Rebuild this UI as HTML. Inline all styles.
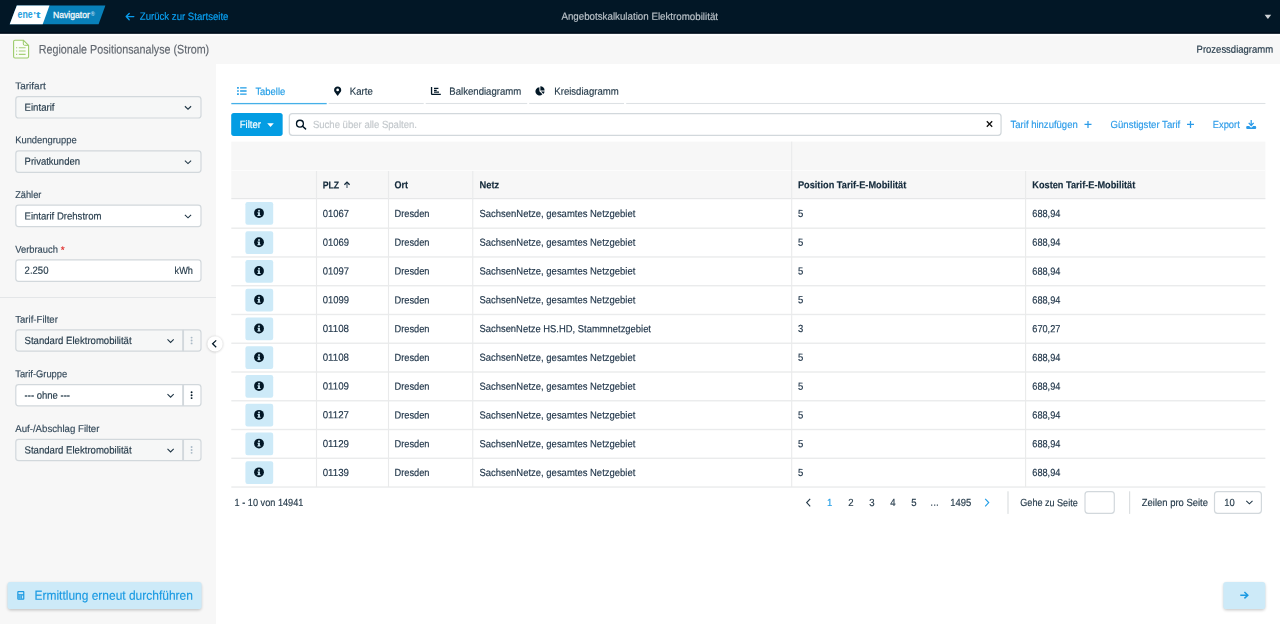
<!DOCTYPE html>
<html lang="de"><head><meta charset="utf-8"><title>Regionale Positionsanalyse (Strom)</title>
<style>
*{box-sizing:border-box;margin:0;padding:0}
html,body{width:1280px;height:624px;overflow:hidden;background:#fff}
body{position:relative;font-family:"Liberation Sans",sans-serif;font-size:9.6px;color:#1f3545}
#bg{position:absolute;left:0;top:0;display:block}
#txt{position:absolute;left:0;top:0;width:1280px;height:624px;will-change:transform}
.t{position:absolute;white-space:nowrap;line-height:14px;height:14px;-webkit-text-stroke:0.15px currentColor}

</style></head><body>
<svg id="bg" width="1280" height="624" viewBox="0 0 1280 624">
<defs><filter id="b1" x="-50%" y="-50%" width="200%" height="200%"><feGaussianBlur stdDeviation="1.2"/></filter><filter id="b2" x="-20%" y="-50%" width="140%" height="200%"><feGaussianBlur stdDeviation="1.4"/></filter></defs>
<rect x="0.00" y="30.00" width="1280.00" height="34.00" fill="#f7f7f7"/>
<rect x="0.00" y="64.00" width="216.00" height="560.00" fill="#f7f7f7"/>
<rect x="0.00" y="34.00" width="1280.00" height="1.80" fill="#ffffff" opacity="0.85"/>
<rect x="0.00" y="0.00" width="1280.00" height="33.70" fill="#021726"/>
<rect x="0.00" y="32.00" width="1280.00" height="1.70" fill="#000c19" opacity="0.7"/>
<g transform="translate(0.00,0.00)"><polygon points="16.8,5.6 105.4,5.6 98.6,24.2 9.7,24.2" fill="#0880b9"/><polygon points="16.8,5.6 49.5,5.6 42.7,24.2 9.7,24.2" fill="#ffffff"/>
<text transform="translate(17.6,18.0) scale(0.79,1)" font-family="Liberation Sans, sans-serif" font-weight="bold" font-size="11.1" fill="#27a0de">ene</text>
<text transform="translate(33.4,18.0) scale(1.1,1)" font-family="Liberation Sans, sans-serif" font-weight="bold" font-size="8.6" fill="#27a0de">'</text>
<text transform="translate(36.0,18.0) scale(1.55,1)" font-family="Liberation Sans, sans-serif" font-weight="bold" font-size="8.8" fill="#27a0de">t</text>
<text x="52.9" y="18.05" font-family="Liberation Sans, sans-serif" font-size="8.5" fill="#f2f7fa" stroke="#f2f7fa" stroke-width="0.3" textLength="37" lengthAdjust="spacingAndGlyphs">Navigator</text>
<text x="90.4" y="15.6" font-family="Liberation Sans, sans-serif" font-weight="bold" font-size="6" fill="#aed8ee">®</text></g>
<g transform="translate(125.60,16.60)"><path d="M3.6 -3.1 L0.6 0 L3.6 3.1 M0.8 0 H8.2" fill="none" stroke="#0a9bea" stroke-width="1.4" stroke-linecap="round" stroke-linejoin="round"/></g>
<g transform="translate(1264.60,14.80)"><path d="M0 0 H6.6 L3.3 4.2 Z" fill="#cfd3d6"/></g>
<g transform="translate(12.00,39.00)"><path d="M3 1.2 H11.3 L16.6 6.3 V17.6 Q16.6 19 15.2 19 H3 Q1.6 19 1.6 17.6 V2.6 Q1.6 1.2 3 1.2 Z" fill="#fbfdf8" stroke="#9ccb6a" stroke-width="1.1" stroke-linejoin="round"/>
<path d="M11.3 1.4 V5 Q11.3 6.3 12.6 6.3 H16.4" fill="none" stroke="#9ccb6a" stroke-width="1"/>
<path d="M4 8.7 H5.2 M6.8 8.7 H13.6 M4 12 H5.2 M6.8 12 H13.6 M4 15.4 H5.2 M6.8 15.4 H13.6" stroke="#a5d078" stroke-width="1.1" fill="none"/></g>
<rect x="15.80" y="96.60" width="185.20" height="21.40" fill="#f6f7f7" rx="2.8" stroke="#d2d8dc" stroke-width="1.2"/>
<g transform="translate(188.00,107.70)"><path d="M-3.1 -1.45 L0 1.55 L3.1 -1.45" fill="none" stroke="#1f3545" stroke-width="1.05"/></g>
<rect x="15.80" y="150.90" width="185.20" height="21.40" fill="#f6f7f7" rx="2.8" stroke="#d2d8dc" stroke-width="1.2"/>
<g transform="translate(188.00,162.00)"><path d="M-3.1 -1.45 L0 1.55 L3.1 -1.45" fill="none" stroke="#1f3545" stroke-width="1.05"/></g>
<rect x="15.80" y="205.10" width="185.20" height="21.50" fill="#ffffff" rx="2.8" stroke="#d2d8dc" stroke-width="1.2"/>
<g transform="translate(188.00,216.25)"><path d="M-3.1 -1.45 L0 1.55 L3.1 -1.45" fill="none" stroke="#1f3545" stroke-width="1.05"/></g>
<rect x="15.80" y="259.90" width="185.20" height="21.40" fill="#ffffff" rx="2.8" stroke="#d2d8dc" stroke-width="1.2"/>
<rect x="0.00" y="297.00" width="216.00" height="1.00" fill="#e4e6e8"/>
<rect x="15.80" y="329.90" width="185.20" height="21.20" fill="#f6f7f7" rx="2.8" stroke="#d2d8dc" stroke-width="1.2"/>
<rect x="182.15" y="329.80" width="1.90" height="21.40" fill="#d2d8dc"/>
<g transform="translate(170.60,340.90)"><path d="M-3.1 -1.45 L0 1.55 L3.1 -1.45" fill="none" stroke="#1f3545" stroke-width="1.05"/></g>
<circle cx="191.6" cy="337.60" r="0.95" fill="#a9b9c6"/>
<circle cx="191.6" cy="340.50" r="0.95" fill="#a9b9c6"/>
<circle cx="191.6" cy="343.40" r="0.95" fill="#a9b9c6"/>
<rect x="15.80" y="384.60" width="185.20" height="21.20" fill="#ffffff" rx="2.8" stroke="#d2d8dc" stroke-width="1.2"/>
<rect x="182.15" y="384.50" width="1.90" height="21.40" fill="#d2d8dc"/>
<g transform="translate(170.60,395.60)"><path d="M-3.1 -1.45 L0 1.55 L3.1 -1.45" fill="none" stroke="#1f3545" stroke-width="1.05"/></g>
<circle cx="191.6" cy="392.30" r="0.95" fill="#021726"/>
<circle cx="191.6" cy="395.20" r="0.95" fill="#021726"/>
<circle cx="191.6" cy="398.10" r="0.95" fill="#021726"/>
<rect x="15.80" y="439.30" width="185.20" height="21.30" fill="#f6f7f7" rx="2.8" stroke="#d2d8dc" stroke-width="1.2"/>
<rect x="182.15" y="439.20" width="1.90" height="21.50" fill="#d2d8dc"/>
<g transform="translate(170.60,450.35)"><path d="M-3.1 -1.45 L0 1.55 L3.1 -1.45" fill="none" stroke="#1f3545" stroke-width="1.05"/></g>
<circle cx="191.6" cy="447.05" r="0.95" fill="#a9b9c6"/>
<circle cx="191.6" cy="449.95" r="0.95" fill="#a9b9c6"/>
<circle cx="191.6" cy="452.85" r="0.95" fill="#a9b9c6"/>
<circle cx="215" cy="344.3" r="8.1" fill="#000" opacity="0.16" filter="url(#b1)"/>
<circle cx="215" cy="343.9" r="7.7" fill="#ffffff"/>
<g transform="translate(214.10,343.80)"><path d="M2.1 -3.4 L-1.5 0 L2.1 3.4" fill="none" stroke="#021726" stroke-width="1.25"/></g>
<rect x="7.80" y="583.30" width="193.50" height="27.00" fill="#000" rx="3" opacity="0.22" filter="url(#b2)"/>
<rect x="7.50" y="582.00" width="194.10" height="27.10" fill="#cdeaf8" rx="2.8"/>
<g transform="translate(17.25,591.00)"><rect x="0" y="0" width="7.1" height="8.8" rx="1" fill="#1b9ae2"/><rect x="1.2" y="1.2" width="4.7" height="2" fill="#cdeaf8"/><path d="M1.2 4.5h1.1v1h-1.1zM3 4.5h1.1v1h-1.1zM4.8 4.5h1.1v3h-1.1zM1.2 6.5h1.1v1h-1.1zM3 6.5h1.1v1h-1.1z" fill="#cdeaf8"/></g>
<rect x="231.30" y="102.95" width="95.40" height="1.30" fill="#45b0e8"/>
<rect x="328.70" y="102.95" width="95.00" height="1.10" fill="#dde1e4"/>
<rect x="425.70" y="102.95" width="101.50" height="1.10" fill="#dde1e4"/>
<rect x="529.20" y="102.95" width="94.80" height="1.10" fill="#dde1e4"/>
<rect x="626.20" y="102.95" width="639.20" height="1.10" fill="#dde1e4"/>
<g transform="translate(237.10,87.10)"><path d="M0 0h1.7v1.6H0zM0 3.1h1.7v1.6H0zM0 6.2h1.7v1.6H0zM3 0.15h6.5v1.3H3zM3 3.25h6.5v1.3H3zM3 6.35h6.5v1.3H3z" fill="#219de6"/></g>
<g transform="translate(334.10,86.50)"><path transform="scale(0.96)" d="M3.7 0C1.6 0 0 1.6 0 3.6 0 5.1 0.5 5.6 3.3 9.4a.5.5 0 0 0 .8 0C6.9 5.6 7.4 5.1 7.4 3.6 7.4 1.6 5.8 0 3.7 0z" fill="#021726"/><circle cx="3.55" cy="3.45" r="1.35" fill="#fff"/></g>
<g transform="translate(430.90,86.90)"><path d="M0.65 0 V6.9 Q0.65 7.55 1.3 7.55 H9.9" fill="none" stroke="#021726" stroke-width="1.3"/><path d="M3.1 0.95h4.4v1.25H3.1zM3.1 2.8h2.7v1.25H3.1zM3.1 4.65h5v1.25H3.1z" fill="#021726"/></g>
<g transform="translate(535.00,86.00)"><path d="M4.4 1.3 A4.1 4.1 0 1 0 7.4 8.3 L4.4 5.3 Z" fill="#021726"/><path d="M5.4 0.3 V4.5 H9.6 A4.2 4.2 0 0 0 5.4 0.3 Z" fill="#021726"/><path d="M6 5.5 H9.6 A4.2 4.2 0 0 1 8.4 7.9 Z" fill="#021726"/></g>
<rect x="231.20" y="113.00" width="51.45" height="22.90" fill="#039de3" rx="2.6"/>
<g transform="translate(267.20,123.30)"><path d="M0 0 H6.6 L3.3 3.8 Z" fill="#fff"/></g>
<rect x="289.32" y="113.62" width="711.75" height="21.65" fill="#ffffff" rx="3" stroke="#d2d8dc" stroke-width="1.25"/>
<g transform="translate(295.85,119.60)"><circle cx="4.1" cy="4.1" r="3.45" fill="none" stroke="#021726" stroke-width="1.3"/><path d="M6.7 6.7 L9.7 9.3" stroke="#021726" stroke-width="1.5" stroke-linecap="round"/></g>
<g transform="translate(989.50,124.00)"><path d="M-2.7 -2.7 L2.7 2.7 M2.7 -2.7 L-2.7 2.7" stroke="#111" stroke-width="1.3"/></g>
<g transform="translate(1088.00,124.40)"><path d="M0 -3.5 V3.5 M-3.5 0 H3.5" stroke="#2b9be8" stroke-width="1.25"/></g>
<g transform="translate(1190.50,124.40)"><path d="M0 -3.5 V3.5 M-3.5 0 H3.5" stroke="#2b9be8" stroke-width="1.25"/></g>
<g transform="translate(1246.20,119.80)"><path d="M5 0.2 V5.4 M2.5 3.1 L5 5.7 L7.5 3.1" fill="none" stroke="#2b9be8" stroke-width="1.25"/><path d="M1.1 6.3 H3 L4.3 7.5 Q5 8 5.7 7.5 L7 6.3 H8.9 Q10 6.3 10 7.4 V8.2 Q10 9.3 8.9 9.3 H1.1 Q0 9.3 0 8.2 V7.4 Q0 6.3 1.1 6.3 Z" fill="#2b9be8"/></g>
<rect x="231.30" y="141.60" width="1034.10" height="56.70" fill="#f7f7f7"/>
<rect x="231.30" y="170.10" width="1034.10" height="1.00" fill="#fcfcfc"/>
<rect x="231.30" y="198.00" width="1034.10" height="1.20" fill="#e6e7e8"/>
<rect x="231.30" y="227.50" width="1034.10" height="1.40" fill="#eaebec"/>
<rect x="231.30" y="256.26" width="1034.10" height="1.40" fill="#eaebec"/>
<rect x="231.30" y="285.02" width="1034.10" height="1.40" fill="#eaebec"/>
<rect x="231.30" y="313.78" width="1034.10" height="1.40" fill="#eaebec"/>
<rect x="231.30" y="342.54" width="1034.10" height="1.40" fill="#eaebec"/>
<rect x="231.30" y="371.30" width="1034.10" height="1.40" fill="#eaebec"/>
<rect x="231.30" y="400.06" width="1034.10" height="1.40" fill="#eaebec"/>
<rect x="231.30" y="428.82" width="1034.10" height="1.40" fill="#eaebec"/>
<rect x="231.30" y="457.58" width="1034.10" height="1.40" fill="#eaebec"/>
<rect x="231.30" y="486.34" width="1034.10" height="1.40" fill="#eaebec"/>
<rect x="315.95" y="171.00" width="1.10" height="316.04" fill="#e9eaeb"/>
<rect x="387.95" y="171.00" width="1.10" height="316.04" fill="#e9eaeb"/>
<rect x="472.20" y="171.00" width="1.10" height="316.04" fill="#e9eaeb"/>
<rect x="1025.05" y="171.00" width="1.10" height="316.04" fill="#e9eaeb"/>
<rect x="791.15" y="141.60" width="1.10" height="345.44" fill="#e9eaeb"/>
<g transform="translate(343.90,181.30)"><path d="M3.1 6.8 V1 " fill="none" stroke="#44586a" stroke-width="1.1"/><path d="M0.5 3.4 L3.1 0.8 L5.7 3.4" fill="none" stroke="#13293a" stroke-width="1.35"/></g>
<rect x="245.40" y="202.10" width="27.80" height="22.60" fill="#cdeaf8" rx="2.2"/>
<g transform="translate(259.00,213.05)"><circle cx="0" cy="0" r="4.9" fill="#021726"/><circle cx="0" cy="-2.3" r="0.95" fill="#cdeaf8"/><path d="M-1.5 -0.7 H0.9 V2 H1.6 V3 H-1.6 V2 H-0.9 V0.3 H-1.5 Z" fill="#cdeaf8"/></g>
<rect x="245.40" y="231.28" width="27.80" height="22.60" fill="#cdeaf8" rx="2.2"/>
<g transform="translate(259.00,242.23)"><circle cx="0" cy="0" r="4.9" fill="#021726"/><circle cx="0" cy="-2.3" r="0.95" fill="#cdeaf8"/><path d="M-1.5 -0.7 H0.9 V2 H1.6 V3 H-1.6 V2 H-0.9 V0.3 H-1.5 Z" fill="#cdeaf8"/></g>
<rect x="245.40" y="260.04" width="27.80" height="22.60" fill="#cdeaf8" rx="2.2"/>
<g transform="translate(259.00,270.99)"><circle cx="0" cy="0" r="4.9" fill="#021726"/><circle cx="0" cy="-2.3" r="0.95" fill="#cdeaf8"/><path d="M-1.5 -0.7 H0.9 V2 H1.6 V3 H-1.6 V2 H-0.9 V0.3 H-1.5 Z" fill="#cdeaf8"/></g>
<rect x="245.40" y="288.80" width="27.80" height="22.60" fill="#cdeaf8" rx="2.2"/>
<g transform="translate(259.00,299.75)"><circle cx="0" cy="0" r="4.9" fill="#021726"/><circle cx="0" cy="-2.3" r="0.95" fill="#cdeaf8"/><path d="M-1.5 -0.7 H0.9 V2 H1.6 V3 H-1.6 V2 H-0.9 V0.3 H-1.5 Z" fill="#cdeaf8"/></g>
<rect x="245.40" y="317.56" width="27.80" height="22.60" fill="#cdeaf8" rx="2.2"/>
<g transform="translate(259.00,328.51)"><circle cx="0" cy="0" r="4.9" fill="#021726"/><circle cx="0" cy="-2.3" r="0.95" fill="#cdeaf8"/><path d="M-1.5 -0.7 H0.9 V2 H1.6 V3 H-1.6 V2 H-0.9 V0.3 H-1.5 Z" fill="#cdeaf8"/></g>
<rect x="245.40" y="346.32" width="27.80" height="22.60" fill="#cdeaf8" rx="2.2"/>
<g transform="translate(259.00,357.27)"><circle cx="0" cy="0" r="4.9" fill="#021726"/><circle cx="0" cy="-2.3" r="0.95" fill="#cdeaf8"/><path d="M-1.5 -0.7 H0.9 V2 H1.6 V3 H-1.6 V2 H-0.9 V0.3 H-1.5 Z" fill="#cdeaf8"/></g>
<rect x="245.40" y="375.08" width="27.80" height="22.60" fill="#cdeaf8" rx="2.2"/>
<g transform="translate(259.00,386.03)"><circle cx="0" cy="0" r="4.9" fill="#021726"/><circle cx="0" cy="-2.3" r="0.95" fill="#cdeaf8"/><path d="M-1.5 -0.7 H0.9 V2 H1.6 V3 H-1.6 V2 H-0.9 V0.3 H-1.5 Z" fill="#cdeaf8"/></g>
<rect x="245.40" y="403.84" width="27.80" height="22.60" fill="#cdeaf8" rx="2.2"/>
<g transform="translate(259.00,414.79)"><circle cx="0" cy="0" r="4.9" fill="#021726"/><circle cx="0" cy="-2.3" r="0.95" fill="#cdeaf8"/><path d="M-1.5 -0.7 H0.9 V2 H1.6 V3 H-1.6 V2 H-0.9 V0.3 H-1.5 Z" fill="#cdeaf8"/></g>
<rect x="245.40" y="432.60" width="27.80" height="22.60" fill="#cdeaf8" rx="2.2"/>
<g transform="translate(259.00,443.55)"><circle cx="0" cy="0" r="4.9" fill="#021726"/><circle cx="0" cy="-2.3" r="0.95" fill="#cdeaf8"/><path d="M-1.5 -0.7 H0.9 V2 H1.6 V3 H-1.6 V2 H-0.9 V0.3 H-1.5 Z" fill="#cdeaf8"/></g>
<rect x="245.40" y="461.36" width="27.80" height="22.60" fill="#cdeaf8" rx="2.2"/>
<g transform="translate(259.00,472.31)"><circle cx="0" cy="0" r="4.9" fill="#021726"/><circle cx="0" cy="-2.3" r="0.95" fill="#cdeaf8"/><path d="M-1.5 -0.7 H0.9 V2 H1.6 V3 H-1.6 V2 H-0.9 V0.3 H-1.5 Z" fill="#cdeaf8"/></g>
<g transform="translate(808.40,502.60)"><path d="M1.8 -3.7 L-1.7 0 L1.8 3.7" fill="none" stroke="#263b4b" stroke-width="1.15"/></g>
<g transform="translate(987.00,502.60)"><path d="M-1.8 -3.7 L1.7 0 L-1.8 3.7" fill="none" stroke="#219de6" stroke-width="1.15"/></g>
<rect x="1007.40" y="491.30" width="1.20" height="22.60" fill="#dcdfe1"/>
<rect x="1129.00" y="491.30" width="1.20" height="22.60" fill="#dcdfe1"/>
<rect x="1085.00" y="491.70" width="29.30" height="21.60" fill="#ffffff" rx="3" stroke="#d2d8dc" stroke-width="1.2"/>
<rect x="1214.50" y="491.70" width="46.90" height="21.60" fill="#ffffff" rx="3" stroke="#d2d8dc" stroke-width="1.2"/>
<g transform="translate(1249.40,502.30)"><path d="M-3.1 -1.45 L0 1.55 L3.1 -1.45" fill="none" stroke="#1f3545" stroke-width="1.05"/></g>
<rect x="1223.60" y="583.30" width="41.40" height="27.00" fill="#000" rx="3" opacity="0.22" filter="url(#b2)"/>
<rect x="1223.30" y="582.00" width="42.00" height="27.10" fill="#cdeaf8" rx="2.8"/>
<g transform="translate(1239.80,595.20)"><path d="M0.5 0 H7.8 M4.6 -3.2 L8 0 L4.6 3.2" fill="none" stroke="#1b9ae2" stroke-width="1.5"/></g>
</svg>
<!-- text -->
<div id="txt">
<span class="t" id="back" style="left:139px;top:9px;font-size:9.62px;color:#0aa2f4;transform-origin:0 10.33px;transform:translate(0.80px,0.89px) rotate(0.03deg) scaleY(1.100)">Zurück zur Startseite</span>
<span class="t" id="ttl" style="left:561px;top:9px;font-size:9.76px;color:#bcc4ca;transform-origin:0 10.38px;transform:translate(0.40px,0.84px) rotate(0.03deg) scaleY(1.062)">Angebotskalkulation Elektromobilität</span>
<span class="t" id="ptitle" style="left:38px;top:42px;font-size:10.73px;color:#626870;transform-origin:0 10.72px;transform:translate(0.80px,0.40px) rotate(0.03deg) scaleY(1.157)">Regionale Positionsanalyse (Strom)</span>
<span class="t" id="proz" style="left:1196px;top:42px;font-size:9.49px;color:#1f3545;transform-origin:0 10.29px;transform:translate(0.60px,0.83px) rotate(0.03deg) scaleY(1.092)">Prozessdiagramm</span>
<span class="t" id="lb1" style="left:15px;top:79px;font-size:10.01px;color:#34495a;transform-origin:0 10.47px;transform:translate(0.20px,0.20px) rotate(0.03deg) scaleY(0.989)">Tarifart</span>
<span class="t" id="lb2" style="left:15px;top:133px;font-size:9.37px;color:#34495a;transform-origin:0 10.25px;transform:translate(0.20px,0.32px) rotate(0.03deg) scaleY(1.056)">Kundengruppe</span>
<span class="t" id="lb3" style="left:15px;top:188px;font-size:9.24px;color:#34495a;transform-origin:0 10.20px;transform:translate(0.20px,0.12px) rotate(0.03deg) scaleY(1.071)">Zähler</span>
<span class="t" id="lb4" style="left:15px;top:242px;font-size:9.37px;color:#34495a;transform-origin:0 10.25px;transform:translate(0.20px,0.72px) rotate(0.03deg) scaleY(1.057)">Verbrauch</span>
<span class="t" id="lb4s" style="left:60px;top:243px;font-size:10.00px;color:#e0312f;transform-origin:0 10.46px;transform:translate(0.80px,0.25px) rotate(0.03deg) scaleY(1.000)">*</span>
<span class="t" id="lb5" style="left:15px;top:312px;font-size:9.61px;color:#34495a;transform-origin:0 10.33px;transform:translate(0.20px,0.64px) rotate(0.03deg) scaleY(1.030)">Tarif-Filter</span>
<span class="t" id="lb6" style="left:15px;top:367px;font-size:9.37px;color:#34495a;transform-origin:0 10.25px;transform:translate(0.20px,0.32px) rotate(0.03deg) scaleY(1.056)">Tarif-Gruppe</span>
<span class="t" id="lb7" style="left:15px;top:421px;font-size:9.67px;color:#34495a;transform-origin:0 10.35px;transform:translate(0.20px,0.97px) rotate(0.03deg) scaleY(1.024)">Auf-/Abschlag Filter</span>
<span class="t" id="v1" style="left:24px;top:100px;font-size:9.64px;color:#1f3545;transform-origin:0 10.34px;transform:translate(0.55px,0.73px) rotate(0.03deg) scaleY(1.076)">Eintarif</span>
<span class="t" id="v2" style="left:24px;top:154px;font-size:9.51px;color:#1f3545;transform-origin:0 10.29px;transform:translate(0.55px,0.78px) rotate(0.03deg) scaleY(1.091)">Privatkunden</span>
<span class="t" id="v3" style="left:24px;top:209px;font-size:9.56px;color:#1f3545;transform-origin:0 10.31px;transform:translate(0.55px,0.51px) rotate(0.03deg) scaleY(1.085)">Eintarif Drehstrom</span>
<span class="t" id="v4" style="left:24px;top:263px;font-size:9.59px;color:#1f3545;transform-origin:0 10.32px;transform:translate(0.55px,0.85px) rotate(0.03deg) scaleY(1.081)">2.250</span>
<span class="t" id="v4u" style="left:174px;top:263px;font-size:9.18px;color:#1f3545;transform-origin:0 10.18px;transform:translate(0.55px,0.99px) rotate(0.03deg) scaleY(1.130)">kWh</span>
<span class="t" id="v5" style="left:24px;top:333px;font-size:9.58px;color:#1f3545;transform-origin:0 10.32px;transform:translate(0.55px,0.95px) rotate(0.03deg) scaleY(1.083)">Standard Elektromobilität</span>
<span class="t" id="v6" style="left:24px;top:388px;font-size:9.52px;color:#1f3545;transform-origin:0 10.30px;transform:translate(0.55px,0.77px) rotate(0.03deg) scaleY(1.089)">--- ohne ---</span>
<span class="t" id="v7" style="left:24px;top:443px;font-size:9.58px;color:#1f3545;transform-origin:0 10.32px;transform:translate(0.55px,0.50px) rotate(0.03deg) scaleY(1.083)">Standard Elektromobilität</span>
<span class="t" id="erm" style="left:34px;top:588px;font-size:11.97px;color:#1b9ae2;transform-origin:0 11.15px;transform:translate(0.50px,0.72px) rotate(0.03deg) scaleY(1.082)">Ermittlung erneut durchführen</span>
<span class="t" id="tab1" style="left:255px;top:84px;font-size:9.43px;color:#219de6;transform-origin:0 10.27px;transform:translate(0.40px,0.90px) rotate(0.03deg) scaleY(1.099)">Tabelle</span>
<span class="t" id="tab2" style="left:349px;top:84px;font-size:9.62px;color:#1f3545;transform-origin:0 10.33px;transform:translate(0.80px,0.84px) rotate(0.03deg) scaleY(1.078)">Karte</span>
<span class="t" id="tab3" style="left:449px;top:84px;font-size:9.60px;color:#1f3545;transform-origin:0 10.32px;transform:translate(0.30px,0.85px) rotate(0.03deg) scaleY(1.081)">Balkendiagramm</span>
<span class="t" id="tab4" style="left:554px;top:84px;font-size:9.59px;color:#1f3545;transform-origin:0 10.32px;transform:translate(0.30px,0.85px) rotate(0.03deg) scaleY(1.081)">Kreisdiagramm</span>
<span class="t" id="filt" style="left:239px;top:118px;font-size:9.54px;color:#ffffff;transform-origin:0 10.30px;transform:translate(0.80px,0.02px) rotate(0.03deg) scaleY(1.110)">Filter</span>
<span class="t" id="srch" style="left:312px;top:118px;font-size:9.55px;color:#c3c8cc;transform-origin:0 10.31px;transform:translate(0.90px,0.01px) rotate(0.03deg) scaleY(1.085)">Suche über alle Spalten.</span>
<span class="t" id="l1" style="left:1010px;top:118px;font-size:9.53px;color:#2b9be8;transform-origin:0 10.30px;transform:translate(0.55px,0.02px) rotate(0.03deg) scaleY(1.089)">Tarif hinzufügen</span>
<span class="t" id="l2" style="left:1110px;top:117px;font-size:9.60px;color:#2b9be8;transform-origin:0 10.33px;transform:translate(0.55px,0.99px) rotate(0.03deg) scaleY(1.080)">Günstigster Tarif</span>
<span class="t" id="l3" style="left:1212px;top:118px;font-size:9.34px;color:#2b9be8;transform-origin:0 10.24px;transform:translate(0.80px,0.08px) rotate(0.03deg) scaleY(1.110)">Export</span>
<span class="t" id="h1" style="left:322px;top:178px;font-size:8.73px;color:#13293a;transform-origin:0 10.03px;transform:translate(0.70px,0.44px) rotate(0.03deg) scaleY(1.162);font-weight:bold">PLZ</span>
<span class="t" id="h2" style="left:394px;top:178px;font-size:9.00px;color:#13293a;transform-origin:0 10.12px;transform:translate(0.50px,0.35px) rotate(0.03deg) scaleY(1.128);font-weight:bold">Ort</span>
<span class="t" id="h3" style="left:479px;top:178px;font-size:9.33px;color:#13293a;transform-origin:0 10.23px;transform:translate(0.50px,0.24px) rotate(0.03deg) scaleY(1.088);font-weight:bold">Netz</span>
<span class="t" id="h4" style="left:797px;top:178px;font-size:9.23px;color:#13293a;transform-origin:0 10.20px;transform:translate(0.90px,0.27px) rotate(0.03deg) scaleY(1.100);font-weight:bold">Position Tarif-E-Mobilität</span>
<span class="t" id="h5" style="left:1032px;top:178px;font-size:9.20px;color:#13293a;transform-origin:0 10.19px;transform:translate(0.30px,0.28px) rotate(0.03deg) scaleY(1.103);font-weight:bold">Kosten Tarif-E-Mobilität</span>
<span class="t" id="p0" style="left:234px;top:496px;font-size:9.19px;color:#263b4b;transform-origin:0 10.19px;transform:translate(0.55px,0.08px) rotate(0.03deg) scaleY(1.128)">1 - 10 von 14941</span>
<span class="t" id="pgo" style="left:1020px;top:496px;font-size:9.07px;color:#263b4b;transform-origin:0 10.14px;transform:translate(0.30px,0.13px) rotate(0.03deg) scaleY(1.143)">Gehe zu Seite</span>
<span class="t" id="pz" style="left:1141px;top:495px;font-size:9.45px;color:#263b4b;transform-origin:0 10.28px;transform:translate(0.80px,0.99px) rotate(0.03deg) scaleY(1.097)">Zeilen pro Seite</span>
<span class="t" id="p10" style="left:1224px;top:495px;font-size:9.44px;color:#263b4b;transform-origin:0 10.27px;transform:translate(0.30px,1.00px) rotate(0.03deg) scaleY(1.099)">10</span>
<span class="t" id="p1495" style="left:950px;top:495px;font-size:9.44px;color:#263b4b;transform-origin:0 10.27px;transform:translate(0.30px,1.00px) rotate(0.03deg) scaleY(1.099)">1495</span>
<span class="t" id="pn0" style="left:827px;top:495px;font-size:9.60px;color:#219de6;transform-origin:0 10.33px;transform:translate(0.05px,0.94px) rotate(0.03deg) scaleY(1.080)">1</span>
<span class="t" id="pn1" style="left:848px;top:495px;font-size:9.60px;color:#263b4b;transform-origin:0 10.33px;transform:translate(0.15px,0.94px) rotate(0.03deg) scaleY(1.080)">2</span>
<span class="t" id="pn2" style="left:869px;top:495px;font-size:9.60px;color:#263b4b;transform-origin:0 10.33px;transform:translate(0.15px,0.94px) rotate(0.03deg) scaleY(1.080)">3</span>
<span class="t" id="pn3" style="left:890px;top:495px;font-size:9.60px;color:#263b4b;transform-origin:0 10.33px;transform:translate(0.25px,0.94px) rotate(0.03deg) scaleY(1.080)">4</span>
<span class="t" id="pn4" style="left:911px;top:495px;font-size:9.60px;color:#263b4b;transform-origin:0 10.33px;transform:translate(0.35px,0.94px) rotate(0.03deg) scaleY(1.080)">5</span>
<span class="t" id="pdots" style="left:930px;top:495px;font-size:10.20px;color:#263b4b;transform-origin:0 10.53px;transform:translate(0.30px,0.74px) rotate(0.03deg) scaleY(1.017)">...</span>
<span class="t" id="r0c0" style="left:322px;top:206px;font-size:9.46px;color:#21364a;transform-origin:0 10.28px;transform:translate(0.70px,0.99px) rotate(0.03deg) scaleY(1.085)">01067</span>
<span class="t" id="r0c1" style="left:394px;top:207px;font-size:9.26px;color:#21364a;transform-origin:0 10.21px;transform:translate(0.50px,0.06px) rotate(0.03deg) scaleY(1.108)">Dresden</span>
<span class="t" id="r0c2" style="left:479px;top:206px;font-size:9.48px;color:#21364a;transform-origin:0 10.29px;transform:translate(0.50px,0.98px) rotate(0.03deg) scaleY(1.082)">SachsenNetze, gesamtes Netzgebiet</span>
<span class="t" id="r0c3" style="left:797px;top:206px;font-size:9.50px;color:#21364a;transform-origin:0 10.29px;transform:translate(0.90px,0.98px) rotate(0.03deg) scaleY(1.080)">5</span>
<span class="t" id="r0c4" style="left:1032px;top:207px;font-size:9.19px;color:#21364a;transform-origin:0 10.18px;transform:translate(0.30px,0.09px) rotate(0.03deg) scaleY(1.117)">688,94</span>
<span class="t" id="r1c0" style="left:322px;top:235px;font-size:9.46px;color:#21364a;transform-origin:0 10.28px;transform:translate(0.70px,0.77px) rotate(0.03deg) scaleY(1.085)">01069</span>
<span class="t" id="r1c1" style="left:394px;top:235px;font-size:9.26px;color:#21364a;transform-origin:0 10.21px;transform:translate(0.50px,0.84px) rotate(0.03deg) scaleY(1.108)">Dresden</span>
<span class="t" id="r1c2" style="left:479px;top:235px;font-size:9.48px;color:#21364a;transform-origin:0 10.29px;transform:translate(0.50px,0.76px) rotate(0.03deg) scaleY(1.082)">SachsenNetze, gesamtes Netzgebiet</span>
<span class="t" id="r1c3" style="left:797px;top:235px;font-size:9.50px;color:#21364a;transform-origin:0 10.29px;transform:translate(0.90px,0.76px) rotate(0.03deg) scaleY(1.080)">5</span>
<span class="t" id="r1c4" style="left:1032px;top:235px;font-size:9.19px;color:#21364a;transform-origin:0 10.18px;transform:translate(0.30px,0.87px) rotate(0.03deg) scaleY(1.117)">688,94</span>
<span class="t" id="r2c0" style="left:322px;top:264px;font-size:9.46px;color:#21364a;transform-origin:0 10.28px;transform:translate(0.70px,0.55px) rotate(0.03deg) scaleY(1.085)">01097</span>
<span class="t" id="r2c1" style="left:394px;top:264px;font-size:9.26px;color:#21364a;transform-origin:0 10.21px;transform:translate(0.50px,0.62px) rotate(0.03deg) scaleY(1.108)">Dresden</span>
<span class="t" id="r2c2" style="left:479px;top:264px;font-size:9.48px;color:#21364a;transform-origin:0 10.29px;transform:translate(0.50px,0.54px) rotate(0.03deg) scaleY(1.082)">SachsenNetze, gesamtes Netzgebiet</span>
<span class="t" id="r2c3" style="left:797px;top:264px;font-size:9.50px;color:#21364a;transform-origin:0 10.29px;transform:translate(0.90px,0.54px) rotate(0.03deg) scaleY(1.080)">5</span>
<span class="t" id="r2c4" style="left:1032px;top:264px;font-size:9.19px;color:#21364a;transform-origin:0 10.18px;transform:translate(0.30px,0.65px) rotate(0.03deg) scaleY(1.117)">688,94</span>
<span class="t" id="r3c0" style="left:322px;top:293px;font-size:9.46px;color:#21364a;transform-origin:0 10.28px;transform:translate(0.70px,0.33px) rotate(0.03deg) scaleY(1.085)">01099</span>
<span class="t" id="r3c1" style="left:394px;top:293px;font-size:9.26px;color:#21364a;transform-origin:0 10.21px;transform:translate(0.50px,0.40px) rotate(0.03deg) scaleY(1.108)">Dresden</span>
<span class="t" id="r3c2" style="left:479px;top:293px;font-size:9.48px;color:#21364a;transform-origin:0 10.29px;transform:translate(0.50px,0.32px) rotate(0.03deg) scaleY(1.082)">SachsenNetze, gesamtes Netzgebiet</span>
<span class="t" id="r3c3" style="left:797px;top:293px;font-size:9.50px;color:#21364a;transform-origin:0 10.29px;transform:translate(0.90px,0.32px) rotate(0.03deg) scaleY(1.080)">5</span>
<span class="t" id="r3c4" style="left:1032px;top:293px;font-size:9.19px;color:#21364a;transform-origin:0 10.18px;transform:translate(0.30px,0.43px) rotate(0.03deg) scaleY(1.117)">688,94</span>
<span class="t" id="r4c0" style="left:322px;top:322px;font-size:9.71px;color:#21364a;transform-origin:0 10.37px;transform:translate(0.70px,0.02px) rotate(0.03deg) scaleY(1.056)">01108</span>
<span class="t" id="r4c1" style="left:394px;top:322px;font-size:9.26px;color:#21364a;transform-origin:0 10.21px;transform:translate(0.50px,0.18px) rotate(0.03deg) scaleY(1.108)">Dresden</span>
<span class="t" id="r4c2" style="left:479px;top:322px;font-size:9.41px;color:#21364a;transform-origin:0 10.26px;transform:translate(0.50px,0.13px) rotate(0.03deg) scaleY(1.091)">SachsenNetze HS.HD, Stammnetzgebiet</span>
<span class="t" id="r4c3" style="left:797px;top:322px;font-size:9.50px;color:#21364a;transform-origin:0 10.29px;transform:translate(0.90px,0.10px) rotate(0.03deg) scaleY(1.080)">3</span>
<span class="t" id="r4c4" style="left:1032px;top:322px;font-size:9.19px;color:#21364a;transform-origin:0 10.18px;transform:translate(0.30px,0.21px) rotate(0.03deg) scaleY(1.117)">670,27</span>
<span class="t" id="r5c0" style="left:322px;top:350px;font-size:9.71px;color:#21364a;transform-origin:0 10.37px;transform:translate(0.70px,0.80px) rotate(0.03deg) scaleY(1.056)">01108</span>
<span class="t" id="r5c1" style="left:394px;top:350px;font-size:9.26px;color:#21364a;transform-origin:0 10.21px;transform:translate(0.50px,0.96px) rotate(0.03deg) scaleY(1.108)">Dresden</span>
<span class="t" id="r5c2" style="left:479px;top:350px;font-size:9.48px;color:#21364a;transform-origin:0 10.29px;transform:translate(0.50px,0.88px) rotate(0.03deg) scaleY(1.082)">SachsenNetze, gesamtes Netzgebiet</span>
<span class="t" id="r5c3" style="left:797px;top:350px;font-size:9.50px;color:#21364a;transform-origin:0 10.29px;transform:translate(0.90px,0.88px) rotate(0.03deg) scaleY(1.080)">5</span>
<span class="t" id="r5c4" style="left:1032px;top:350px;font-size:9.19px;color:#21364a;transform-origin:0 10.18px;transform:translate(0.30px,0.99px) rotate(0.03deg) scaleY(1.117)">688,94</span>
<span class="t" id="r6c0" style="left:322px;top:379px;font-size:9.71px;color:#21364a;transform-origin:0 10.37px;transform:translate(0.70px,0.58px) rotate(0.03deg) scaleY(1.056)">01109</span>
<span class="t" id="r6c1" style="left:394px;top:379px;font-size:9.26px;color:#21364a;transform-origin:0 10.21px;transform:translate(0.50px,0.74px) rotate(0.03deg) scaleY(1.108)">Dresden</span>
<span class="t" id="r6c2" style="left:479px;top:379px;font-size:9.48px;color:#21364a;transform-origin:0 10.29px;transform:translate(0.50px,0.66px) rotate(0.03deg) scaleY(1.082)">SachsenNetze, gesamtes Netzgebiet</span>
<span class="t" id="r6c3" style="left:797px;top:379px;font-size:9.50px;color:#21364a;transform-origin:0 10.29px;transform:translate(0.90px,0.66px) rotate(0.03deg) scaleY(1.080)">5</span>
<span class="t" id="r6c4" style="left:1032px;top:379px;font-size:9.19px;color:#21364a;transform-origin:0 10.18px;transform:translate(0.30px,0.77px) rotate(0.03deg) scaleY(1.117)">688,94</span>
<span class="t" id="r7c0" style="left:322px;top:408px;font-size:9.71px;color:#21364a;transform-origin:0 10.37px;transform:translate(0.70px,0.36px) rotate(0.03deg) scaleY(1.056)">01127</span>
<span class="t" id="r7c1" style="left:394px;top:408px;font-size:9.26px;color:#21364a;transform-origin:0 10.21px;transform:translate(0.50px,0.52px) rotate(0.03deg) scaleY(1.108)">Dresden</span>
<span class="t" id="r7c2" style="left:479px;top:408px;font-size:9.48px;color:#21364a;transform-origin:0 10.29px;transform:translate(0.50px,0.44px) rotate(0.03deg) scaleY(1.082)">SachsenNetze, gesamtes Netzgebiet</span>
<span class="t" id="r7c3" style="left:797px;top:408px;font-size:9.50px;color:#21364a;transform-origin:0 10.29px;transform:translate(0.90px,0.44px) rotate(0.03deg) scaleY(1.080)">5</span>
<span class="t" id="r7c4" style="left:1032px;top:408px;font-size:9.19px;color:#21364a;transform-origin:0 10.18px;transform:translate(0.30px,0.55px) rotate(0.03deg) scaleY(1.117)">688,94</span>
<span class="t" id="r8c0" style="left:322px;top:437px;font-size:9.71px;color:#21364a;transform-origin:0 10.37px;transform:translate(0.70px,0.14px) rotate(0.03deg) scaleY(1.056)">01129</span>
<span class="t" id="r8c1" style="left:394px;top:437px;font-size:9.26px;color:#21364a;transform-origin:0 10.21px;transform:translate(0.50px,0.30px) rotate(0.03deg) scaleY(1.108)">Dresden</span>
<span class="t" id="r8c2" style="left:479px;top:437px;font-size:9.48px;color:#21364a;transform-origin:0 10.29px;transform:translate(0.50px,0.22px) rotate(0.03deg) scaleY(1.082)">SachsenNetze, gesamtes Netzgebiet</span>
<span class="t" id="r8c3" style="left:797px;top:437px;font-size:9.50px;color:#21364a;transform-origin:0 10.29px;transform:translate(0.90px,0.22px) rotate(0.03deg) scaleY(1.080)">5</span>
<span class="t" id="r8c4" style="left:1032px;top:437px;font-size:9.19px;color:#21364a;transform-origin:0 10.18px;transform:translate(0.30px,0.33px) rotate(0.03deg) scaleY(1.117)">688,94</span>
<span class="t" id="r9c0" style="left:322px;top:465px;font-size:9.71px;color:#21364a;transform-origin:0 10.37px;transform:translate(0.70px,0.92px) rotate(0.03deg) scaleY(1.056)">01139</span>
<span class="t" id="r9c1" style="left:394px;top:466px;font-size:9.26px;color:#21364a;transform-origin:0 10.21px;transform:translate(0.50px,0.08px) rotate(0.03deg) scaleY(1.108)">Dresden</span>
<span class="t" id="r9c2" style="left:479px;top:466px;font-size:9.48px;color:#21364a;transform-origin:0 10.29px;transform:translate(0.50px,0.00px) rotate(0.03deg) scaleY(1.082)">SachsenNetze, gesamtes Netzgebiet</span>
<span class="t" id="r9c3" style="left:797px;top:465px;font-size:9.50px;color:#21364a;transform-origin:0 10.29px;transform:translate(0.90px,1.00px) rotate(0.03deg) scaleY(1.080)">5</span>
<span class="t" id="r9c4" style="left:1032px;top:466px;font-size:9.19px;color:#21364a;transform-origin:0 10.18px;transform:translate(0.30px,0.11px) rotate(0.03deg) scaleY(1.117)">688,94</span>
</div>
</body></html>
